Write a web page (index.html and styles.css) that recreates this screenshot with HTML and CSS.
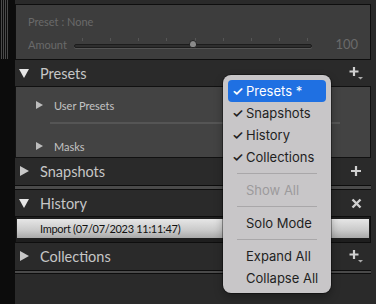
FILE: index.html
```html
<!DOCTYPE html>
<html lang="en">
<head>
  <meta charset="UTF-8" />
  <title>Presets panel</title>
  <link rel="stylesheet" href="styles.css">
</head>
<body>
  <div class="edge">
    <div class="edge-lines"></div>
  </div>
  <div class="panel">
    <div class="preset-box">
      <div class="preset-line">Preset : None</div>
      <div class="amount-line">
        <span class="amount-label">Amount</span>
        <div class="slider">
          <div class="ticks"><i></i><i></i><i></i><i></i><i></i><i></i><i></i><i></i><i></i></div>
          <div class="track"></div>
          <div class="thumb"></div>
        </div>
        <span class="amount-val">100</span>
      </div>
    </div>

    <div class="head">
      <span class="tri down"></span>
      <span class="head-title">Presets</span>
      <svg class="ico plus" width="16" height="14" viewBox="0 0 16 14"><path d="M5 1v9M0.5 5.5h9" stroke="#d0d0d0" stroke-width="2.2" fill="none"/><path d="M9 11h5l-2.5 2.5z" fill="#aaa"/></svg>
    </div>
    <div class="group-box">
      <div class="group">
        <span class="tri small"></span>
        <span>User Presets</span>
      </div>
      <div class="group-sep"></div>
      <div class="group">
        <span class="tri small"></span>
        <span>Masks</span>
      </div>
    </div>

    <div class="head">
      <span class="tri"></span>
      <span class="head-title">Snapshots</span>
      <svg class="ico" width="12" height="12" viewBox="0 0 12 12"><path d="M6 1v10M1 6h10" stroke="#d0d0d0" stroke-width="2.2" fill="none"/></svg>
    </div>
    <div class="bar"></div>

    <div class="head">
      <span class="tri down"></span>
      <span class="head-title">History</span>
      <svg class="ico" width="11" height="11" viewBox="0 0 11 11"><path d="M1.5 1.5l8 8M9.5 1.5l-8 8" stroke="#d0d0d0" stroke-width="2.4" fill="none"/></svg>
    </div>
    <div class="history-box">
      <div class="history-row">Import (07/07/2023 11:11:47)</div>
    </div>

    <div class="head">
      <span class="tri"></span>
      <span class="head-title">Collections</span>
      <svg class="ico plus" width="16" height="14" viewBox="0 0 16 14"><path d="M5 1v9M0.5 5.5h9" stroke="#d0d0d0" stroke-width="2.2" fill="none"/><path d="M9 11h5l-2.5 2.5z" fill="#aaa"/></svg>
    </div>
    <div class="bar thin"></div>
  </div>

  <div class="menu">
    <div class="item active"><span class="check">✓</span>Presets *</div>
    <div class="item"><span class="check">✓</span>Snapshots</div>
    <div class="item"><span class="check">✓</span>History</div>
    <div class="item"><span class="check">✓</span>Collections</div>
    <div class="menu-sep"></div>
    <div class="item disabled">Show All</div>
    <div class="menu-sep"></div>
    <div class="item">Solo Mode</div>
    <div class="menu-sep"></div>
    <div class="item">Expand All</div>
    <div class="item">Collapse All</div>
  </div>
</body>
</html>
```

FILE: styles.css
```css
body {
  margin: 0;
  width: 376px;
  height: 304px;
  overflow: hidden;
  display: flex;
  background: #2a2a2a;
  font-family: 'Lato', sans-serif;
  color: #c9c9c9;
}
.edge {
  width: 15px;
  flex: none;
  background: #0c0c0c;
}
.edge-lines {
  width: 9px;
  height: 59px;
  background: repeating-linear-gradient(90deg, #0c0c0c 0 1px, #4a4a4a 1px 2px);
}
.panel {
  width: 356px;
  padding-top: 4px;
}
.preset-box {
  height: 56px;
  box-sizing: border-box;
  border: 1px solid #0e0e0e;
  background: #3d3d3d;
  padding: 10px 12px 0 12px;
  color: #6a6a6a;
  font-size: 11px;
}
.preset-line {
  height: 14px;
  line-height: 14px;
}
.amount-line {
  display: flex;
  align-items: center;
  margin-top: 8px;
  height: 14px;
}
.amount-label {
  width: 46px;
}
.slider {
  position: relative;
  width: 238px;
  height: 14px;
}
.ticks {
  display: flex;
  justify-content: space-between;
  padding: 0 4px 0 8px;
  height: 5px;
  margin-top: 1px;
}
.ticks i {
  width: 1px;
  height: 3px;
  background: #555;
}
.track {
  height: 2px;
  margin-top: 1px;
  border: 1px solid #1c1c1c;
  border-radius: 2px;
  background: #2e2e2e;
  box-shadow: 0 1px 0 #555;
}
.thumb {
  position: absolute;
  left: 115px;
  top: 3px;
  width: 8px;
  height: 8px;
  background: #8a8a8a;
  border: 1px solid #222;
  border-radius: 50% 50% 3px 3px;
  box-sizing: border-box;
}
.amount-val {
  margin-left: auto;
  font-size: 13px;
}
.head {
  height: 26px;
  display: flex;
  align-items: center;
  padding: 0 6px 0 5px;
}
.head-title {
  font-size: 14.5px;
  margin-left: 11px;
  color: #c6c6c6;
}
.tri {
  width: 0;
  height: 0;
  border-left: 9px solid #c8c8c8;
  border-top: 5px solid transparent;
  border-bottom: 5px solid transparent;
}
.tri.down {
  border-top: 9px solid #e6e6e6;
  border-left: 5px solid transparent;
  border-right: 5px solid transparent;
  border-bottom: none;
  margin-left: -1px;
}
.tri.small {
  border-left-width: 7px;
  border-top-width: 4px;
  border-bottom-width: 4px;
  border-left-color: #bdbdbd;
}
.ico {
  margin-left: auto;
  margin-right: 3px;
}
.ico.plus {
  margin-right: 0;
}
.group-box {
  height: 72px;
  box-sizing: border-box;
  border: 1px solid #111;
  background: #434343;
  padding: 7px 0 0 20px;
}
.group {
  display: flex;
  align-items: center;
  height: 22px;
  font-size: 11px;
  color: #c4c4c4;
}
.group span + span {
  margin-left: 11px;
}
.group-sep {
  height: 2px;
  background: #555;
  margin: 6px 30px 11px 14px;
}
.bar {
  height: 5px;
  box-sizing: border-box;
  border-top: 1px solid #0d0d0d;
  border-bottom: 1px solid #0d0d0d;
  background: #4a4a4a;
  margin-top: 1px;
}
.bar.thin {
  height: 4px;
}
.history-box {
  height: 27px;
  box-sizing: border-box;
  border: 1px solid #0e0e0e;
  background: #1e1e1e;
  padding: 2px 1px 4px 1px;
}
.history-row {
  height: 19px;
  line-height: 19px;
  background: linear-gradient(#e6e6e6, #c9c9c9 60%, #a9a9a9);
  color: #111;
  font-size: 11px;
  letter-spacing: -0.3px;
  padding-left: 23px;
}
.menu {
  position: absolute;
  left: 223px;
  top: 75px;
  width: 108px;
  height: 218px;
  box-sizing: border-box;
  padding: 5px 5px;
  background: #c8c6c8;
  border-radius: 8px;
  box-shadow: 0 0 0 1px rgba(0,0,0,0.35), 0 4px 10px rgba(0,0,0,0.3);
  font-family: 'Inter', sans-serif;
  font-size: 13px;
  color: #1f1f1f;
}
.item {
  height: 22px;
  line-height: 22px;
  padding-left: 18px;
  border-radius: 4px;
  position: relative;
}
.check {
  position: absolute;
  left: 4px;
  font-size: 13px;
  font-weight: 600;
}
.item.active {
  background: #1f70e2;
  color: #fff;
}
.item.disabled {
  color: #9c9a9c;
}
.menu-sep {
  height: 1px;
  background: #a9a7a9;
  margin: 5px 9px 5px 9px;
}
```
